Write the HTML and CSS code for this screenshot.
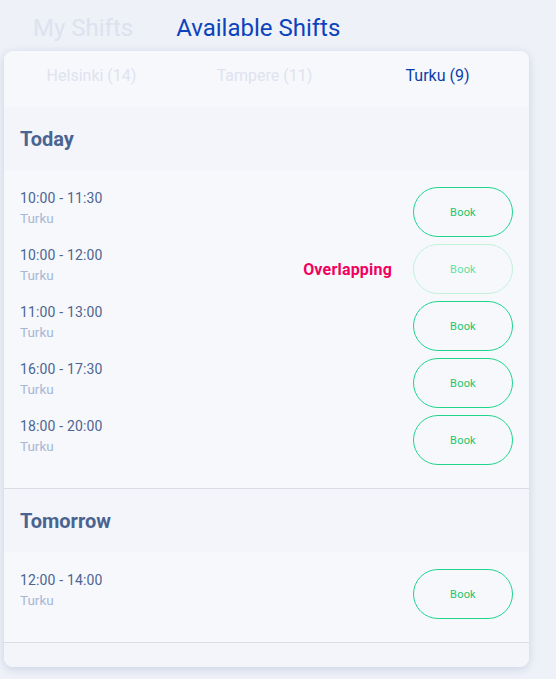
FILE: index.html
```html
<!DOCTYPE html>
<html>
<head>
<meta charset="utf-8">
<link rel="stylesheet" href="styles.css">
</head>
<body>
<div class="page">
  <nav class="top-tabs">
    <span class="top-tab">My Shifts</span>
    <span class="top-tab active">Available Shifts</span>
  </nav>
  <div class="card">
    <div class="city-tabs">
      <span class="city-tab">Helsinki (14)</span>
      <span class="city-tab">Tampere (11)</span>
      <span class="city-tab active">Turku (9)</span>
    </div>
    <section class="day">
      <h2 class="day-title">Today</h2>
      <div class="rows">
        <div class="row">
          <div class="info"><div class="time">10:00 - 11:30</div><div class="place">Turku</div></div>
          <button class="book">Book</button>
        </div>
        <div class="row">
          <div class="info"><div class="time">10:00 - 12:00</div><div class="place">Turku</div></div>
          <span class="overlap">Overlapping</span>
          <button class="book disabled">Book</button>
        </div>
        <div class="row">
          <div class="info"><div class="time">11:00 - 13:00</div><div class="place">Turku</div></div>
          <button class="book">Book</button>
        </div>
        <div class="row">
          <div class="info"><div class="time">16:00 - 17:30</div><div class="place">Turku</div></div>
          <button class="book">Book</button>
        </div>
        <div class="row">
          <div class="info"><div class="time">18:00 - 20:00</div><div class="place">Turku</div></div>
          <button class="book">Book</button>
        </div>
      </div>
    </section>
    <section class="day">
      <h2 class="day-title">Tomorrow</h2>
      <div class="rows">
        <div class="row">
          <div class="info"><div class="time">12:00 - 14:00</div><div class="place">Turku</div></div>
          <button class="book">Book</button>
        </div>
      </div>
    </section>
    <div class="card-foot"></div>
  </div>
</div>
</body>
</html>
```

FILE: styles.css
```css
html, body {
  margin: 0;
  padding: 0;
  background: #eef1f8;
  font-family: Roboto, "Liberation Sans", sans-serif;
}
.page {
  padding: 0 27px 12px 4px;
}
.top-tabs {
  display: flex;
  gap: 43px;
  height: 51px;
  padding-left: 29px;
  padding-top: 5px;
  box-sizing: border-box;
  align-items: center;
}
.top-tab {
  font-size: 24px;
  color: #dde2ef;
  line-height: 28px;
}
.top-tab.active {
  color: #0b43bd;
}
.card {
  background: #f6f8fc;
  border-radius: 9px;
  box-shadow: 0 2px 8px rgba(160, 170, 200, 0.45);
  overflow: hidden;
}
.city-tabs {
  display: grid;
  grid-template-columns: 1fr 1fr 1fr;
  height: 56px;
  align-items: center;
  padding-bottom: 8px;
  box-sizing: border-box;
  background: #f7f8fc;
}
.city-tab {
  text-align: center;
  font-size: 16px;
  color: #dfe3ef;
}
.city-tab:nth-child(1) { padding-right: 0; }
.city-tab:nth-child(2) { padding-right: 4px; }
.city-tab.active {
  color: #0b3ea8;
  padding-right: 8px;
}
.day {
  border-bottom: 1px solid #d9dce4;
}
.day-title {
  margin: 0;
  height: 63px;
  display: flex;
  align-items: center;
  padding: 0 16px;
  font-size: 20px;
  font-weight: 700;
  color: #4a6491;
  background: #f3f5fa;
}
.rows {
  display: flex;
  flex-direction: column;
  gap: 7px;
  padding: 17px 16px 23px;
}
.row {
  display: flex;
  align-items: flex-start;
  height: 50px;
}
.info {
  flex: 1;
  padding-top: 1px;
}
.time {
  font-size: 14px;
  line-height: 20px;
  letter-spacing: 0.15px;
  color: #4d6592;
}
.place {
  font-size: 13.5px;
  line-height: 20px;
  color: #a7b7d4;
}
.overlap {
  align-self: center;
  font-size: 16px;
  font-weight: 700;
  letter-spacing: 0.2px;
  color: #f2005e;
  margin-right: 21px;
  margin-top: 1px;
}
.book {
  width: 100px;
  height: 50px;
  border-radius: 25px;
  border: 1px solid #1fd58a;
  background: transparent;
  color: #22c46a;
  font-family: Roboto, "Liberation Sans", sans-serif;
  font-size: 11px;
  padding: 0;
  letter-spacing: 0.2px;
}
.book.disabled {
  border-color: #c2f2d9;
  color: #5fe0a4;
}
.card-foot {
  height: 24px;
  background: #f3f5fa;
}
```
